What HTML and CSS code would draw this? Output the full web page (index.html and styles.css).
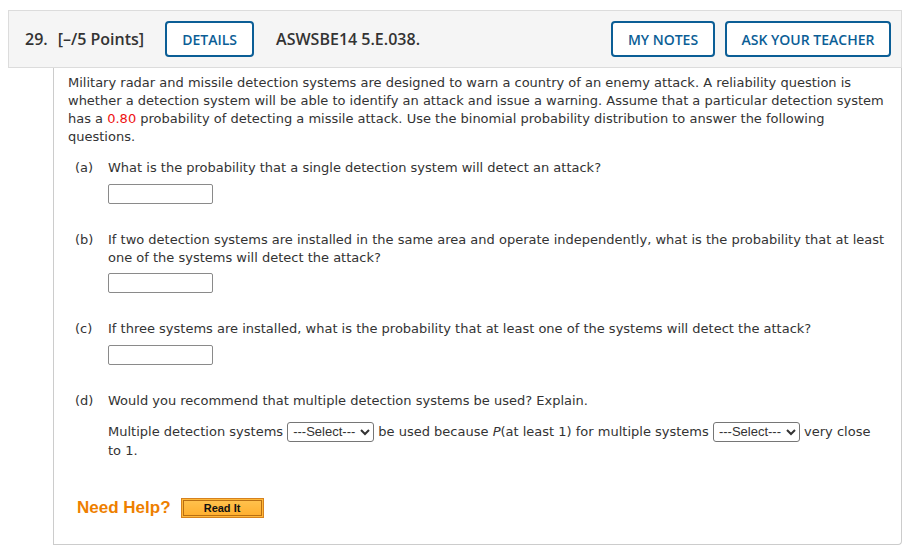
FILE: index.html
```html
<!DOCTYPE html>
<html>
<head>
<meta charset="utf-8">
<link rel="stylesheet" href="styles.css">
</head>
<body>
<div class="question">
  <div class="q-header">
    <span class="q-num">29.</span>
    <span class="q-points">[–/5 Points]</span>
    <button class="hbtn details">DETAILS</button>
    <span class="q-code">ASWSBE14 5.E.038.</span>
    <span class="spacer"></span>
    <button class="hbtn notes">MY NOTES</button>
    <button class="hbtn ask">ASK YOUR TEACHER</button>
  </div>
  <div class="q-body">
    <p class="intro">Military radar and missile detection systems are designed to warn a country of an enemy attack. A reliability question is whether a detection system will be able to identify an attack and issue a warning. Assume that a particular detection system has a <span class="red">0.80</span> probability of detecting a missile attack. Use the binomial probability distribution to answer the following questions.</p>

    <div class="part">
      <span class="plabel">(a)</span>
      <div class="pbody">
        <div class="ptext">What is the probability that a single detection system will detect an attack?</div>
        <input class="answer" type="text">
      </div>
    </div>

    <div class="part">
      <span class="plabel">(b)</span>
      <div class="pbody">
        <div class="ptext">If two detection systems are installed in the same area and operate independently, what is the probability that at least one of the systems will detect the attack?</div>
        <input class="answer short" type="text">
      </div>
    </div>

    <div class="part">
      <span class="plabel">(c)</span>
      <div class="pbody">
        <div class="ptext">If three systems are installed, what is the probability that at least one of the systems will detect the attack?</div>
        <input class="answer" type="text">
      </div>
    </div>

    <div class="part">
      <span class="plabel">(d)</span>
      <div class="pbody">
        <div class="ptext">Would you recommend that multiple detection systems be used? Explain.</div>
        <div class="ptext fill">Multiple detection systems <select class="sel"><option>---Select---</option></select> be used because <i>P</i>(at least 1) for multiple systems <select class="sel"><option>---Select---</option></select> very close to 1.</div>
      </div>
    </div>

    <div class="help">
      <span class="help-title">Need Help?</span>
      <button class="readit"><span>Read It</span></button>
    </div>
  </div>
</div>
</body>
</html>
```

FILE: styles.css
```css
html, body {
  margin: 0;
  padding: 0;
  background: #ffffff;
}

.question {
  margin: 10px 0 0 8px;
  width: 894px;
}

.q-header {
  box-sizing: border-box;
  height: 58px;
  display: flex;
  align-items: center;
  background: #f5f5f5;
  border: 1px solid #dcdcdc;
  padding: 0 10px 0 16px;
  font-family: "Open Sans", sans-serif;
  font-weight: 600;
  font-size: 16px;
  color: #333333;
}

.q-num {
  margin-right: 10px;
}

.q-points {
  margin-right: 21px;
}

.q-code {
  margin-left: 22px;
}

.spacer {
  flex: 1;
}

.hbtn {
  box-sizing: border-box;
  height: 36px;
  background: #ffffff;
  border: 2px solid #0b5e96;
  border-radius: 4px;
  color: #0b5e96;
  font-family: "Open Sans", sans-serif;
  font-weight: 600;
  font-size: 14px;
  padding: 0;
  cursor: pointer;
}

.details { width: 89px; }
.notes { width: 104px; margin-right: 10px; }
.ask { width: 166px; }

.q-body {
  box-sizing: border-box;
  margin-left: 45px;
  height: 477px;
  border: 1px solid #cccccc;
  border-top: none;
  border-bottom-right-radius: 4px;
  padding: 6px 13px 0 14px;
  font-family: "DejaVu Sans", Verdana, sans-serif;
  font-size: 13px;
  line-height: 18px;
  color: #333333;
}

.intro {
  margin: 0 0 13px 0;
}

.red {
  color: #ee1111;
}

.part {
  display: flex;
  margin-bottom: 27px;
}

.plabel {
  width: 40px;
  padding-left: 7px;
  box-sizing: border-box;
  flex: none;
}

.pbody {
  flex: 1;
  min-width: 0;
  padding-right: 3px;
}

.answer {
  display: block;
  box-sizing: border-box;
  width: 105px;
  height: 20px;
  margin-top: 7px;
  border: 1px solid #8a8a8a;
  border-radius: 2px;
  padding: 0;
}

.answer.short {
  margin-top: 6px;
}

.fill {
  margin-top: 13px;
}

.sel {
  box-sizing: border-box;
  height: 20px;
  width: 87px;
  font-family: "Liberation Sans", Arial, sans-serif;
  font-size: 13px;
  color: #333333;
  border: 1px solid #767676;
  border-radius: 3px;
  background: #ffffff;
  padding: 0 0 0 1px;
  vertical-align: middle;
  margin: -2px 0 0 0;
}

.help {
  display: flex;
  align-items: center;
  margin-top: 38px;
  padding-left: 9px;
}

.help-title {
  font-family: "Liberation Sans", Arial, sans-serif;
  font-weight: bold;
  font-size: 17px;
  color: #ee7f00;
  margin-right: 10px;
}

.readit {
  box-sizing: border-box;
  width: 83px;
  height: 20px;
  padding: 1px;
  border: 1px solid #d6821e;
  background: #ffb83a;
  cursor: pointer;
  display: flex;
}

.readit span {
  flex: 1;
  display: flex;
  align-items: center;
  justify-content: center;
  border: 1px solid #b86e12;
  background: linear-gradient(#ffc14c, #ffb030);
  font-family: "Liberation Sans", Arial, sans-serif;
  font-weight: bold;
  font-size: 11px;
  color: #111111;
}
```
